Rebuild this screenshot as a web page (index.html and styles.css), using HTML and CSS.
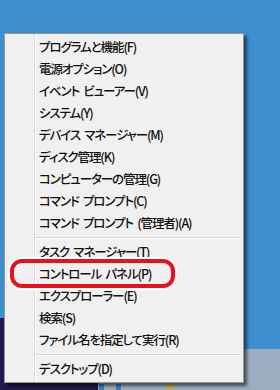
FILE: index.html
```html
<!DOCTYPE html>
<html lang="ja">
<head>
<meta charset="utf-8">
<link rel="stylesheet" href="styles.css">
</head>
<body>
<div class="desktop">
  <div class="patch navy"></div>
  <div class="patch gray">
    <span class="tb-icon ic1"></span>
    <span class="tb-icon ic2"></span>
    <span class="tb-icon ic3"></span>
  </div>
  <div class="menu">
    <div class="item">プログラムと機能(F)</div>
    <div class="item">電源オプション(O)</div>
    <div class="item">イベント ビューアー(V)</div>
    <div class="item">システム(Y)</div>
    <div class="item">デバイス マネージャー(M)</div>
    <div class="item">ディスク管理(K)</div>
    <div class="item">コンピューターの管理(G)</div>
    <div class="item">コマンド プロンプト(C)</div>
    <div class="item">コマンド プロンプト (管理者)(A)</div>
    <div class="sep"></div>
    <div class="item">タスク マネージャー(T)</div>
    <div class="item marked">コントロール パネル(P)<span class="ring"></span></div>
    <div class="item">エクスプローラー(E)</div>
    <div class="item">検索(S)</div>
    <div class="item">ファイル名を指定して実行(R)</div>
    <div class="sep"></div>
    <div class="item">デスクトップ(D)</div>
  </div>
</div>
</body>
</html>
```
FILE: styles.css
```css
html, body {
  margin: 0;
  padding: 0;
}
.desktop {
  position: relative;
  width: 280px;
  height: 390px;
  overflow: hidden;
  background: #3f8fcf;
  padding: 33px 0 0 4px;
  box-sizing: border-box;
}
.patch {
  position: absolute;
}
.navy {
  left: 0;
  top: 318px;
  width: 98px;
  height: 72px;
  background: #221a4e;
}
.gray {
  left: 98px;
  top: 349px;
  width: 182px;
  height: 41px;
  background: #9cadbf;
}
.tb-icon {
  position: absolute;
  top: 35px;
  width: 5px;
  height: 6px;
}
.ic1 { left: 1px; background: #3a7fc4; }
.ic2 { left: 18px; background: #3a7fc4; }
.ic3 { left: 68px; width: 8px; background: #b8b060; }
.menu {
  position: relative;
  width: 240px;
  box-sizing: border-box;
  border: 1px solid #979797;
  background: #f0f0f0 linear-gradient(to right, transparent 29px, #dcdcdc 29px, #dcdcdc 30px, #ffffff 30px, #ffffff 31px, transparent 31px);
  padding: 2px 0 2px 0;
  box-shadow: 3px 3px 3px rgba(0, 0, 0, 0.55);
  font-family: "Noto Sans CJK JP", sans-serif;
  font-feature-settings: "palt";
  font-size: 12.5px;
  font-weight: 500;
  letter-spacing: -1.1px;
  word-spacing: 2.5px;
  color: #111;
}
.item {
  position: relative;
  height: 22px;
  line-height: 22px;
  padding-left: 34px;
  white-space: nowrap;
}
.sep {
  height: 7px;
  margin: 0 2px 0 30px;
  box-sizing: border-box;
  padding-top: 3px;
}
.sep::before {
  content: "";
  display: block;
  height: 1px;
  background: #d5d5d5;
  border-bottom: 1px solid #ffffff;
}
.ring {
  position: absolute;
  left: 5px;
  top: -4px;
  width: 165px;
  height: 29px;
  box-sizing: border-box;
  border: 4px solid #e8101a;
  border-radius: 12px;
  box-shadow: 0 0 0 2px #ffffff;
}
```
